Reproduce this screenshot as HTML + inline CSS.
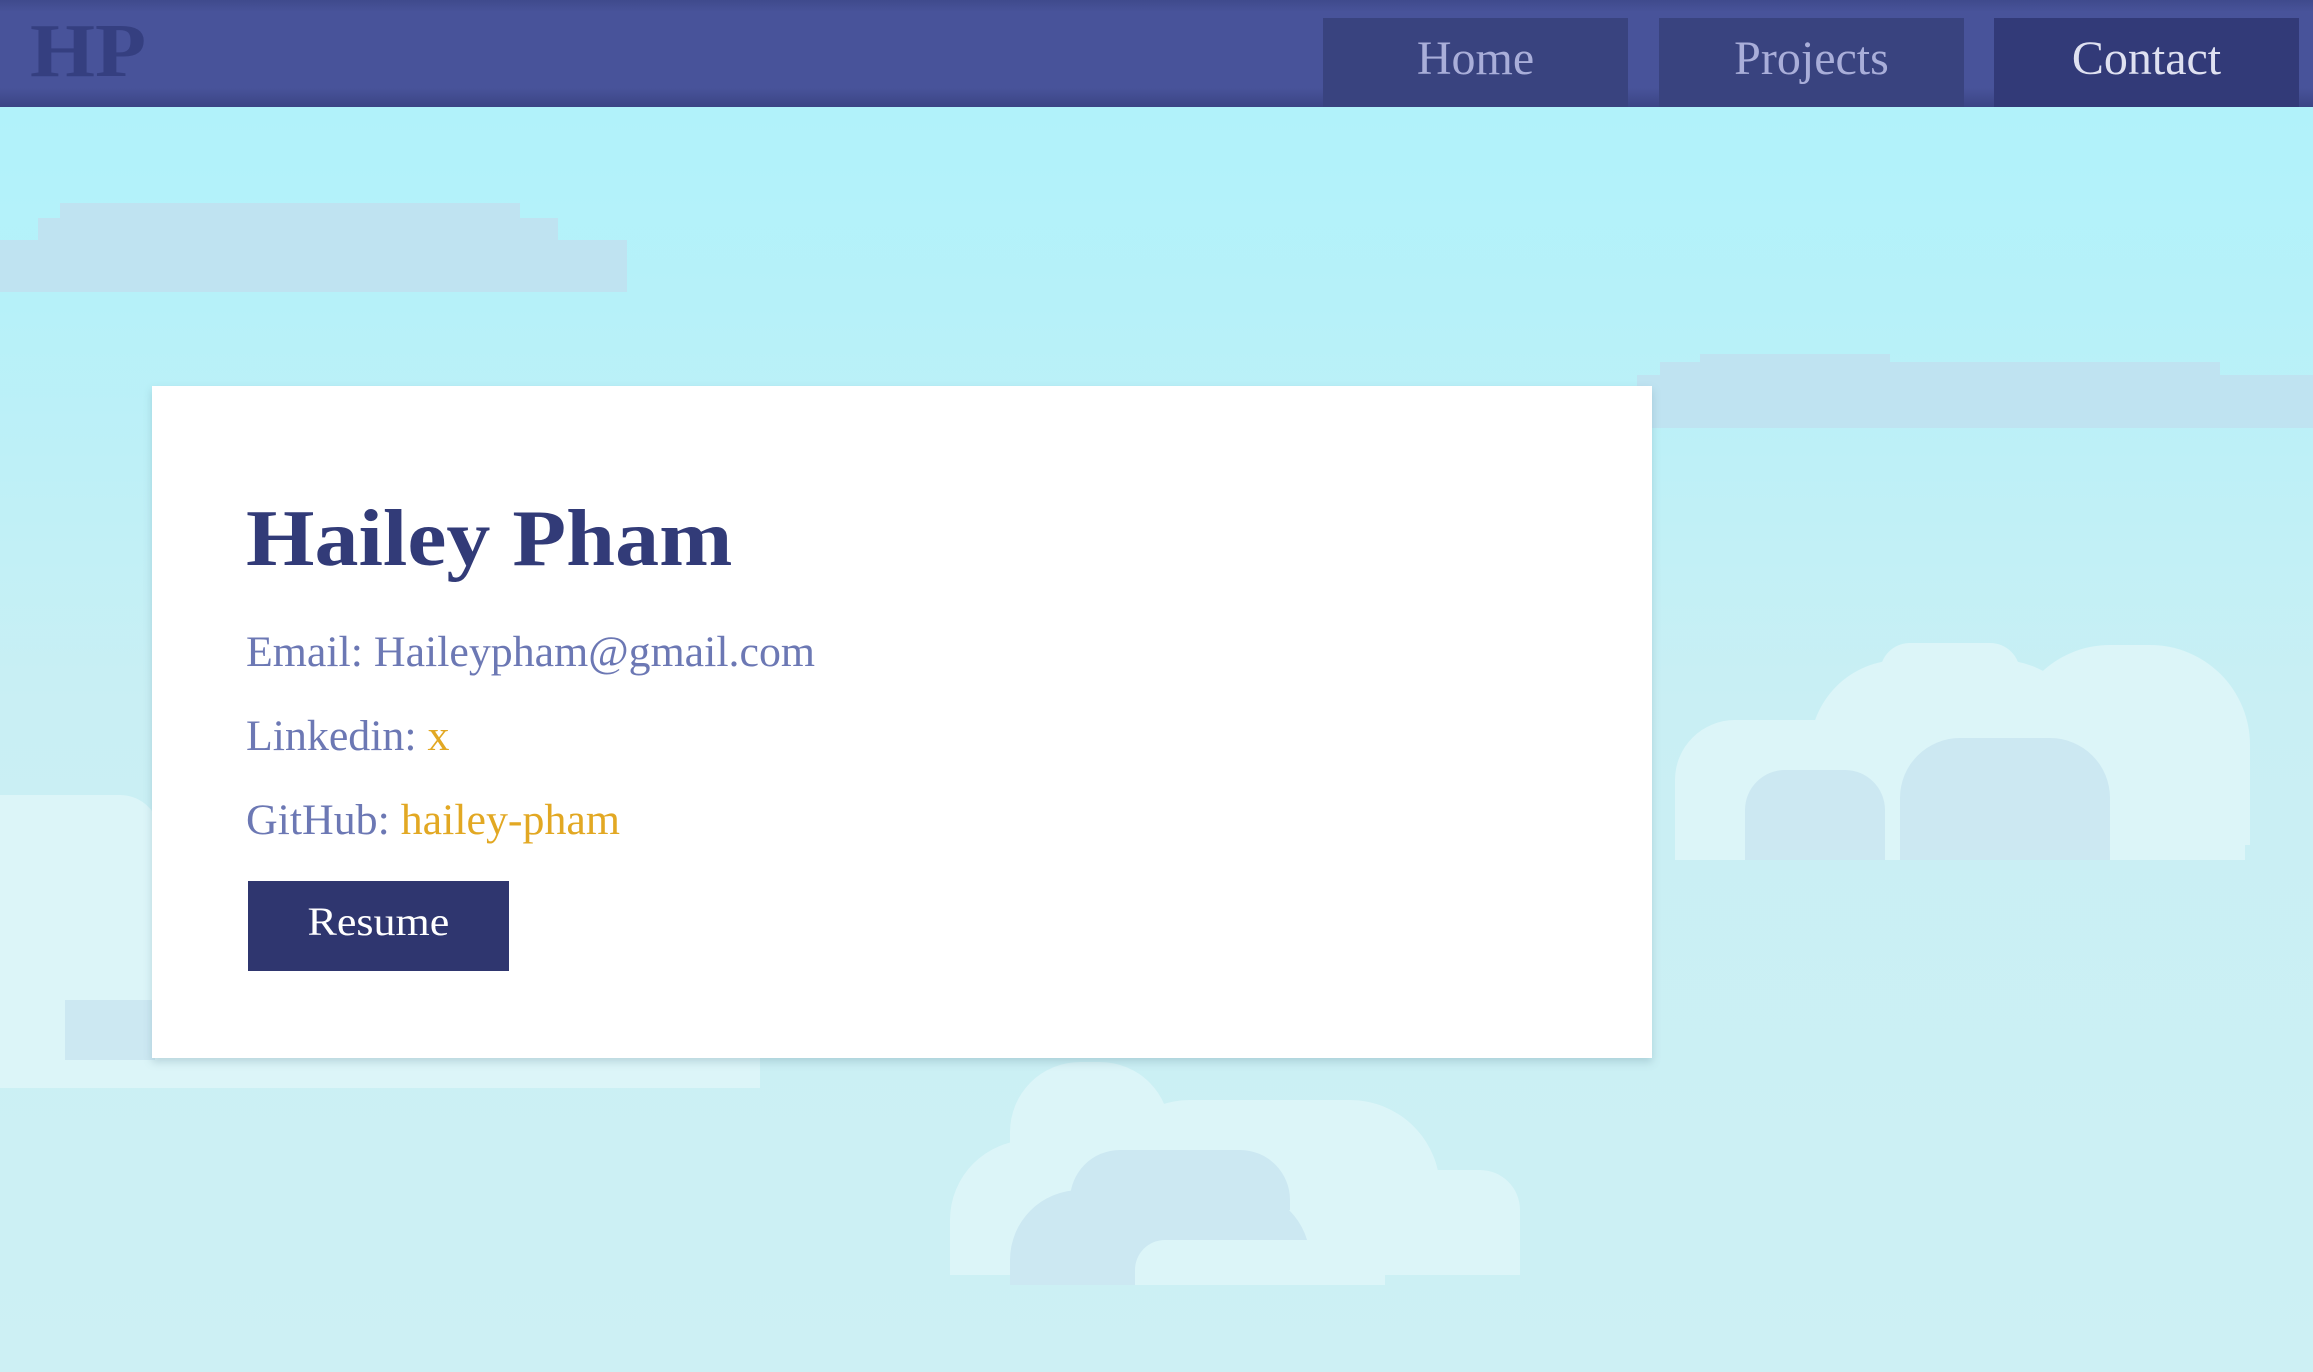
<!DOCTYPE html>
<html><head><meta charset="utf-8">
<style>
*{margin:0;padding:0;box-sizing:border-box}
html,body{width:2313px;height:1372px;overflow:hidden}
body{position:relative;background:linear-gradient(#aef3fb 0px,#b6f1f9 300px,#c9eff4 700px,#cdf0f4 1372px);font-family:"Liberation Serif",serif}
nav{position:absolute;left:0;top:0;width:2313px;height:107px;background:linear-gradient(#3f4a8c 0,#48539a 12px,#48539a 88px,#3b4585 107px)}
.logo{position:absolute;left:30px;top:8px;font-size:76px;font-weight:bold;color:#353f80;transform:scaleX(1.1);transform-origin:left;letter-spacing:0px}
.nb{position:absolute;top:18px;width:305px;height:89px;background:#39437f;color:#a9aed9;font-size:48px;text-align:center;line-height:82px;}
.nb span{display:inline-block;transform:scaleX(1.0)}
.c{position:absolute}
.d{background:#bfe3f1}
.l{background:#dcf5f8}
.m{background:#cce8f2}
.card{position:absolute;left:152px;top:386px;width:1500px;height:672px;background:#fff;box-shadow:0 4px 8px rgba(80,120,140,.25)}
h1{position:absolute;left:94px;top:108px;font-size:80px;font-weight:bold;color:#323b78;white-space:nowrap;transform:scaleX(1.1);transform-origin:left}
.p{position:absolute;left:94px;font-size:43px;color:#6c78b4;white-space:nowrap;transform:scaleX(1.02);transform-origin:left}
.o{color:#e2a823}
.btn{position:absolute;left:96px;top:495px;width:261px;height:90px;background:#2f366f;color:#fff;font-size:40px;text-align:center;line-height:82px}
.btn span{display:inline-block;transform:scaleX(1.1)}
</style></head><body>
<div class="c d" style="left:0;top:240px;width:627px;height:52px"></div>
<div class="c d" style="left:38px;top:218px;width:520px;height:30px"></div>
<div class="c d" style="left:60px;top:203px;width:460px;height:20px"></div>
<div class="c d" style="left:1637px;top:375px;width:676px;height:53px"></div>
<div class="c d" style="left:1660px;top:362px;width:560px;height:20px"></div>
<div class="c d" style="left:1700px;top:354px;width:110px;height:12px"></div>
<div class="c d" style="left:1805px;top:354px;width:85px;height:12px"></div>

<div class="c l" style="left:1675px;top:720px;width:570px;height:140px;border-radius:60px 60px 0 0"></div>
<div class="c l" style="left:1810px;top:660px;width:280px;height:120px;border-radius:90px 90px 0 0"></div>
<div class="c l" style="left:1880px;top:643px;width:140px;height:30px;border-radius:40px 40px 0 0"></div>
<div class="c l" style="left:2010px;top:645px;width:240px;height:200px;border-radius:100px 100px 0 0"></div>
<div class="c m" style="left:1900px;top:738px;width:210px;height:122px;border-radius:60px 60px 0 0"></div>
<div class="c m" style="left:1745px;top:770px;width:140px;height:90px;border-radius:40px 40px 0 0"></div>

<div class="c l" style="left:0;top:795px;width:160px;height:292px;border-radius:0 40px 0 0"></div>
<div class="c l" style="left:0;top:1050px;width:760px;height:38px"></div>
<div class="c m" style="left:65px;top:1000px;width:90px;height:60px"></div>

<div class="c l" style="left:950px;top:1140px;width:300px;height:135px;border-radius:80px 80px 0 0"></div>
<div class="c l" style="left:1010px;top:1062px;width:160px;height:120px;border-radius:70px 70px 0 0"></div>
<div class="c l" style="left:1100px;top:1100px;width:340px;height:175px;border-radius:90px 90px 0 0"></div>
<div class="c l" style="left:1300px;top:1170px;width:220px;height:105px;border-radius:40px 40px 0 0"></div>
<div class="c m" style="left:1010px;top:1190px;width:300px;height:95px;border-radius:70px 70px 0 0"></div>
<div class="c m" style="left:1070px;top:1150px;width:220px;height:60px;border-radius:50px 50px 0 0"></div>
<div class="c l" style="left:1135px;top:1240px;width:250px;height:45px;border-radius:30px 30px 0 0"></div>

<nav>
<div class="logo">HP</div>
<div class="nb" style="left:1323px"><span>Home</span></div>
<div class="nb" style="left:1659px"><span>Projects</span></div>
<div class="nb" style="left:1994px;background:#323a78;color:#dfe1f1"><span>Contact</span></div>
</nav>

<div class="card">
<h1>Hailey Pham</h1>
<div class="p" style="top:242px">Email: Haileypham@gmail.com</div>
<div class="p" style="top:326px">Linkedin: <span class="o">x</span></div>
<div class="p" style="top:410px">GitHub: <span class="o">hailey-pham</span></div>
<div class="btn"><span>Resume</span></div>
</div>
</body></html>
